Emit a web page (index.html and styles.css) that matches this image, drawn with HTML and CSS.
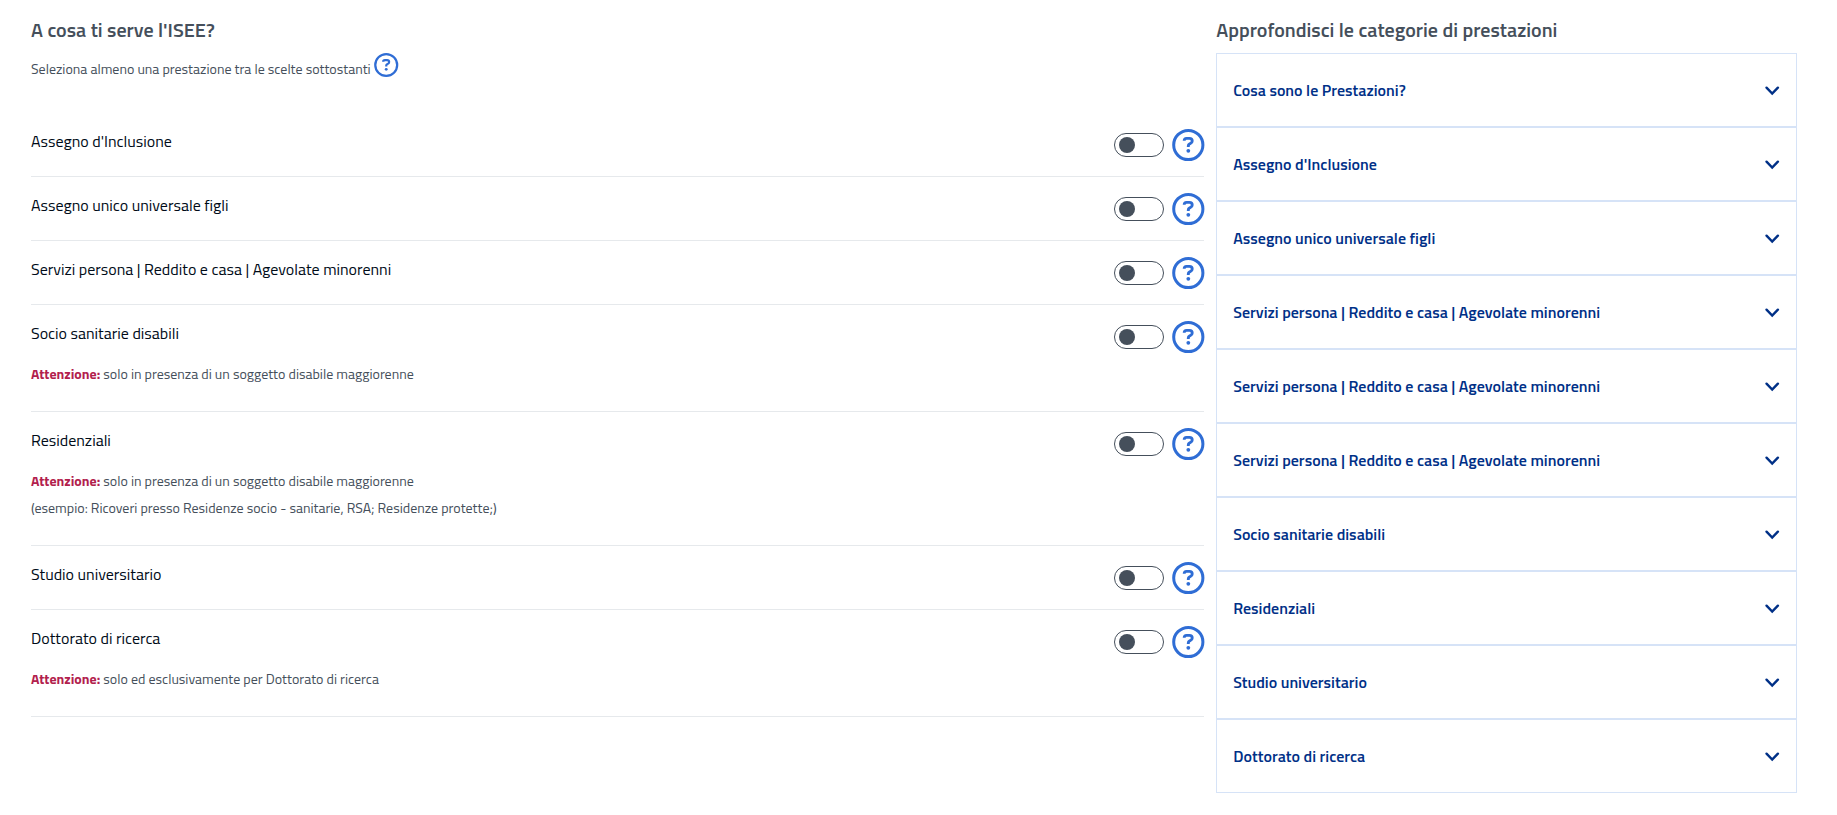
FILE: index.html
```html
<!DOCTYPE html>
<html lang="it">
<head>
<meta charset="utf-8">
<meta name="viewport" content="width=device-width, initial-scale=1">
<title>A cosa ti serve l'ISEE?</title>
<link rel="stylesheet" href="styles.css">
</head>
<body>
<svg class="sprite" aria-hidden="true">
  <symbol id="help" viewBox="0 0 32 32">
    <circle cx="16.3" cy="16" r="14.6" fill="none" stroke="currentColor" stroke-width="3"/>
    <path d="M12.2 11.8C12.2 10.1 13 9.4 14.6 9.4H17.4c1.8 0 2.8.9 2.8 2.5 0 1.3-.6 2-1.8 2.6l-1 .6c-.8.4-1.1.9-1.1 1.8v1.1" fill="none" stroke="currentColor" stroke-width="2.9"/>
    <circle cx="16.3" cy="21.8" r="1.9" fill="currentColor"/>
  </symbol>
  <symbol id="chevron" viewBox="0 0 16 16">
    <path d="M2.5 5.7l5.7 5.9 5.7-5.9" fill="none" stroke="currentColor" stroke-width="2.4" stroke-linecap="round"/>
  </symbol>
</svg>
<main class="page">
  <section class="choices">
    <h2 class="heading">A cosa ti serve l'ISEE?</h2>
    <div class="intro">
      <p class="intro-text">Seleziona almeno una prestazione tra le scelte sottostanti</p>
      <button class="help help-small" type="button" aria-label="Aiuto"><svg class="icon"><use href="#help"/></svg></button>
    </div>
    <ul class="list">
      <li class="row">
        <div class="copy"><label class="name" for="s1">Assegno d'Inclusione</label></div>
        <input class="switch" type="checkbox" role="switch" id="s1">
        <button class="help" type="button" aria-label="Aiuto Assegno d'Inclusione"><svg class="icon"><use href="#help"/></svg></button>
      </li>
      <li class="row">
        <div class="copy"><label class="name" for="s2">Assegno unico universale figli</label></div>
        <input class="switch" type="checkbox" role="switch" id="s2">
        <button class="help" type="button" aria-label="Aiuto Assegno unico"><svg class="icon"><use href="#help"/></svg></button>
      </li>
      <li class="row">
        <div class="copy"><label class="name" for="s3">Servizi persona | Reddito e casa | Agevolate minorenni</label></div>
        <input class="switch" type="checkbox" role="switch" id="s3">
        <button class="help" type="button" aria-label="Aiuto Servizi persona"><svg class="icon"><use href="#help"/></svg></button>
      </li>
      <li class="row">
        <div class="copy"><label class="name" for="s4">Socio sanitarie disabili</label>
          <p class="note"><strong class="alert">Attenzione:</strong> solo in presenza di un soggetto disabile maggiorenne</p></div>
        <input class="switch" type="checkbox" role="switch" id="s4">
        <button class="help" type="button" aria-label="Aiuto Socio sanitarie disabili"><svg class="icon"><use href="#help"/></svg></button>
      </li>
      <li class="row">
        <div class="copy"><label class="name" for="s5">Residenziali</label>
          <p class="note"><strong class="alert">Attenzione:</strong> solo in presenza di un soggetto disabile maggiorenne<br>(esempio: Ricoveri presso Residenze socio - sanitarie, RSA; Residenze protette;)</p></div>
        <input class="switch" type="checkbox" role="switch" id="s5">
        <button class="help" type="button" aria-label="Aiuto Residenziali"><svg class="icon"><use href="#help"/></svg></button>
      </li>
      <li class="row">
        <div class="copy"><label class="name" for="s6">Studio universitario</label></div>
        <input class="switch" type="checkbox" role="switch" id="s6">
        <button class="help" type="button" aria-label="Aiuto Studio universitario"><svg class="icon"><use href="#help"/></svg></button>
      </li>
      <li class="row">
        <div class="copy"><label class="name" for="s7">Dottorato di ricerca</label>
          <p class="note"><strong class="alert">Attenzione:</strong> solo ed esclusivamente per Dottorato di ricerca</p></div>
        <input class="switch" type="checkbox" role="switch" id="s7">
        <button class="help" type="button" aria-label="Aiuto Dottorato di ricerca"><svg class="icon"><use href="#help"/></svg></button>
      </li>
    </ul>
  </section>
  <section class="details">
    <h2 class="heading">Approfondisci le categorie di prestazioni</h2>
    <div class="accordion">
      <button class="panel" type="button" aria-expanded="false">Cosa sono le Prestazioni?<svg class="chevron"><use href="#chevron"/></svg></button>
      <button class="panel" type="button" aria-expanded="false">Assegno d'Inclusione<svg class="chevron"><use href="#chevron"/></svg></button>
      <button class="panel" type="button" aria-expanded="false">Assegno unico universale figli<svg class="chevron"><use href="#chevron"/></svg></button>
      <button class="panel" type="button" aria-expanded="false">Servizi persona | Reddito e casa | Agevolate minorenni<svg class="chevron"><use href="#chevron"/></svg></button>
      <button class="panel" type="button" aria-expanded="false">Servizi persona | Reddito e casa | Agevolate minorenni<svg class="chevron"><use href="#chevron"/></svg></button>
      <button class="panel" type="button" aria-expanded="false">Servizi persona | Reddito e casa | Agevolate minorenni<svg class="chevron"><use href="#chevron"/></svg></button>
      <button class="panel" type="button" aria-expanded="false">Socio sanitarie disabili<svg class="chevron"><use href="#chevron"/></svg></button>
      <button class="panel" type="button" aria-expanded="false">Residenziali<svg class="chevron"><use href="#chevron"/></svg></button>
      <button class="panel" type="button" aria-expanded="false">Studio universitario<svg class="chevron"><use href="#chevron"/></svg></button>
      <button class="panel" type="button" aria-expanded="false">Dottorato di ricerca<svg class="chevron"><use href="#chevron"/></svg></button>
    </div>
  </section>
</main>
</body>
</html>
```
FILE: styles.css
```css
* { box-sizing: border-box; }
body {
  margin: 0;
  background: #fff;
  color: #454f5b;
  font-family: "Titillium Web", Roboto, "Noto Sans", sans-serif;
}
h2, p, ul { margin: 0; padding: 0; }
button { margin: 0; background: none; font-family: inherit; cursor: pointer; }
.sprite { display: none; }
.page {
  display: grid;
  grid-template-columns: minmax(0, 101fr) minmax(0, 50fr);
  gap: 12px;
  align-items: start;
  padding: 15px 40px 22px 31px;
}
.heading {
  font-size: 20px;
  font-weight: 600;
  line-height: 30px;
}
.intro {
  display: flex;
  align-items: flex-start;
  gap: 3px;
  padding: 8px 0 31px;
}
.intro-text { padding-top: 2px; font-size: 14px; line-height: 27px; }
.help {
  display: block;
  flex: none;
  width: 32px;
  height: 32px;
  padding: 0;
  border: 0;
  color: #2f6dd5;
}
.help-small { width: 24px; height: 24px; }
.icon { display: block; width: 100%; height: 100%; overflow: visible; }
#help { overflow: visible; }
.list { list-style: none; }
.row {
  display: flex;
  align-items: flex-start;
  gap: 8px;
  padding: 16px 0 15px;
  border-bottom: 1px solid #e6e9ec;
}
.copy { flex: 1; min-width: 0; }
.name { display: block; color: #000b18; font-size: 16px; line-height: 24px; }
.note { padding: 15px 0 9px; font-size: 14px; line-height: 27px; }
.alert { color: #b2204d; font-weight: 700; }
.switch {
  appearance: none;
  flex: none;
  display: flex;
  align-items: center;
  width: 50px;
  height: 24px;
  margin: 4px 0;
  padding: 0 4px;
  border: 1px solid #454f5b;
  border-radius: 12px;
  background: #fff;
}
.switch::before {
  content: "";
  width: 16px;
  height: 16px;
  border-radius: 50%;
  background: #454f5b;
}
.switch:checked { justify-content: flex-end; }
.accordion { margin-top: 8px; }
.panel {
  display: flex;
  align-items: center;
  justify-content: space-between;
  width: 100%;
  padding: 24px 16px;
  border: 1px solid #d6e3f7;
  color: #003087;
  font-size: 16px;
  font-weight: 600;
  line-height: 24px;
  text-align: left;
}
.chevron { flex: none; width: 16px; height: 16px; }
```
